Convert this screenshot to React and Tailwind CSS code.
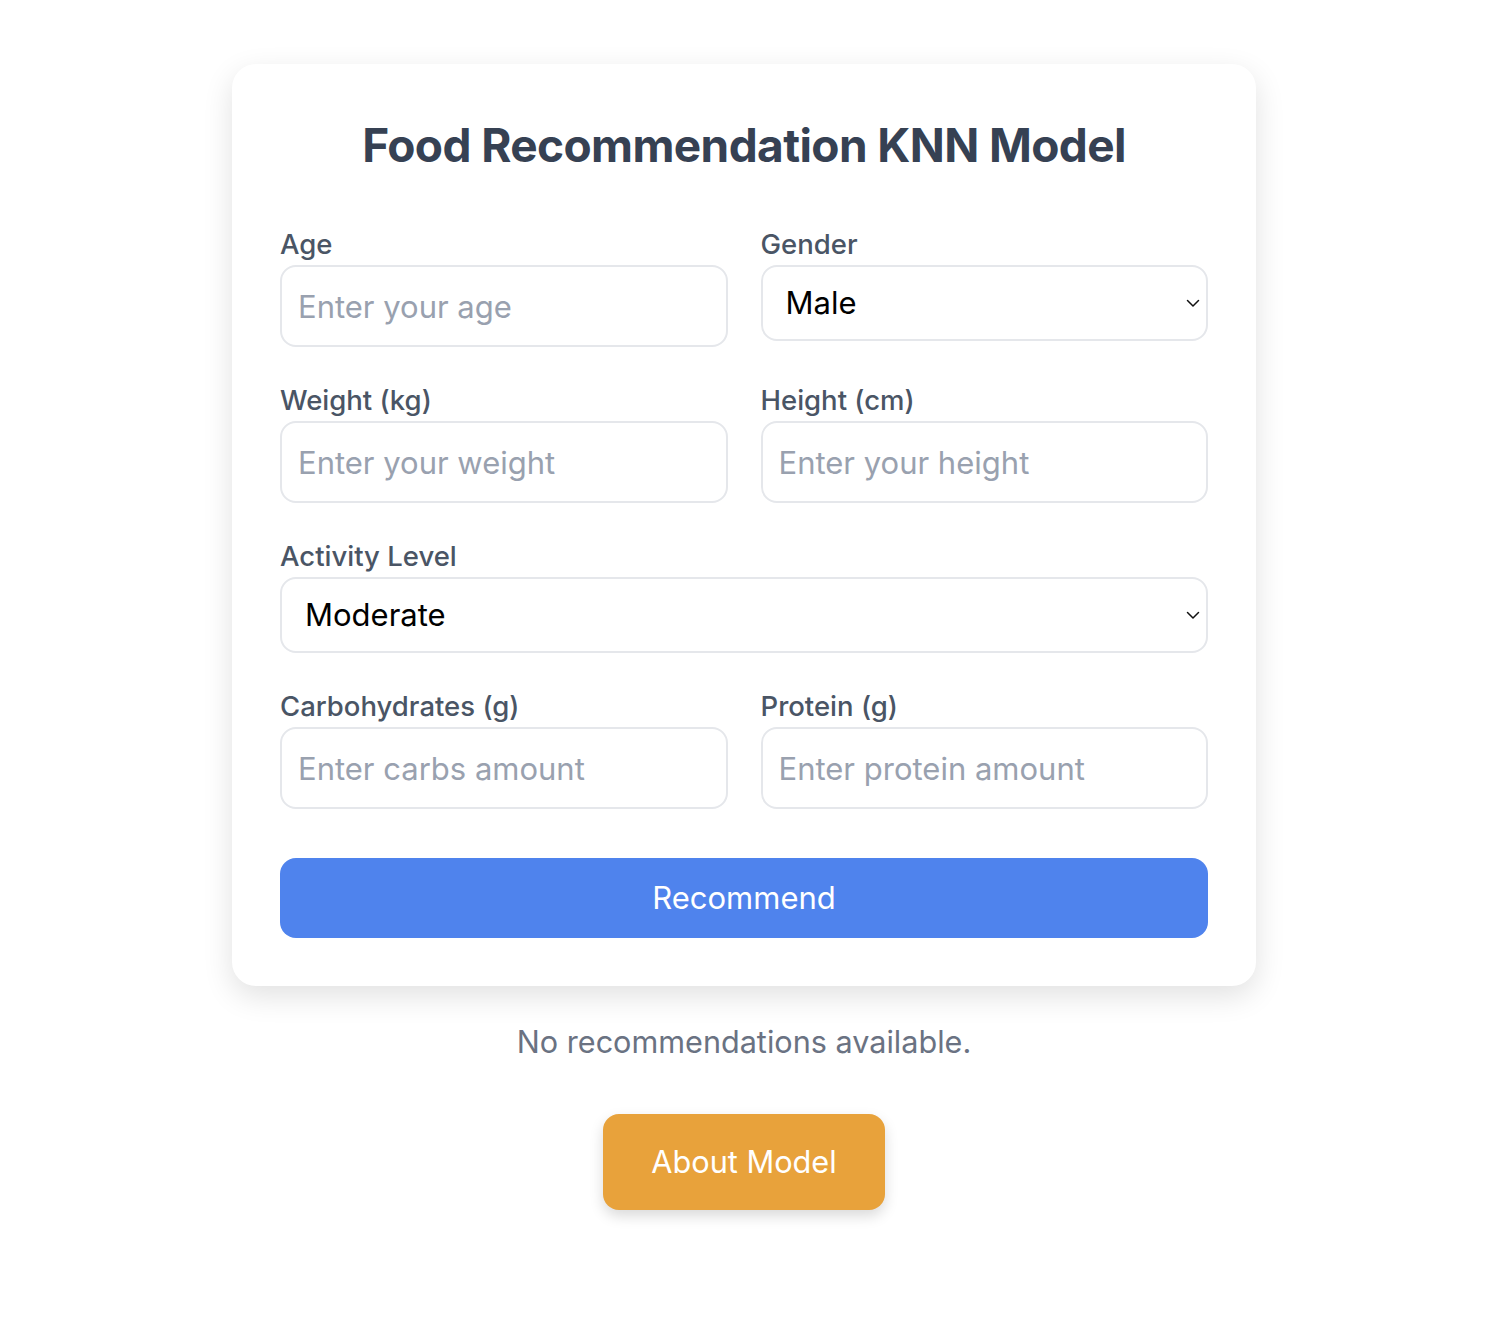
import React, { useState } from "react";

const font = { fontFamily: "Inter, 'Noto Sans', sans-serif" };

function Field({ label, placeholder, value, onChange }) {
  return (
    <div className="flex flex-col">
      <label className="text-[27.5px] leading-[30px] font-medium text-gray-600 mb-[6px]">{label}</label>
      <input
        type="number"
        placeholder={placeholder}
        value={value}
        onChange={(e) => onChange(e.target.value)}
        className="h-[82px] w-full rounded-[16px] border-2 border-gray-200 bg-white px-[16px] text-[31px] text-gray-800 placeholder:text-gray-400 outline-none"
      />
    </div>
  );
}

function Select({ label, value, onChange, options }) {
  return (
    <div className="flex flex-col">
      <label className="text-[27.5px] leading-[30px] font-medium text-gray-600 mb-[6px]">{label}</label>
      <div className="relative">
        <select
          value={value}
          onChange={(e) => onChange(e.target.value)}
          className="h-[76px] w-full appearance-none rounded-[16px] border-2 border-gray-200 bg-white pl-[23px] pr-[48px] text-[31px] text-black outline-none"
        >
          {options.map((o) => (
            <option key={o}>{o}</option>
          ))}
        </select>
        <svg
          className="pointer-events-none absolute right-[8px] top-[34px]"
          width="14"
          height="9"
          viewBox="0 0 14 9"
          fill="none"
        >
          <path d="M1.5 1.5l5.5 5.5 5.5-5.5" stroke="#111" strokeWidth="1.5" strokeLinecap="round" strokeLinejoin="round" />
        </svg>
      </div>
    </div>
  );
}

export default function App() {
  const [age, setAge] = useState("");
  const [gender, setGender] = useState("Male");
  const [weight, setWeight] = useState("");
  const [height, setHeight] = useState("");
  const [activity, setActivity] = useState("Moderate");
  const [carbs, setCarbs] = useState("");
  const [protein, setProtein] = useState("");

  return (
    <div className="min-h-screen bg-white pr-[10px] pt-[64px] pb-[100px]" style={font}>
      <div className="mx-auto w-[1024px] rounded-[24px] bg-white px-[48px] pt-[48px] pb-[48px] shadow-[0_10px_30px_rgba(0,0,0,0.12)]">
        <h1 className="text-center text-[46px] leading-[66px] font-bold tracking-[-0.6px] text-gray-700 mb-[51px]">
          Food Recommendation KNN Model
        </h1>
        <form onSubmit={(e) => e.preventDefault()}>
          <div className="grid grid-cols-2 gap-x-[33px] gap-y-[38px]">
            <Field label="Age" placeholder="Enter your age" value={age} onChange={setAge} />
            <Select label="Gender" value={gender} onChange={setGender} options={["Male", "Female"]} />
            <Field label="Weight (kg)" placeholder="Enter your weight" value={weight} onChange={setWeight} />
            <Field label="Height (cm)" placeholder="Enter your height" value={height} onChange={setHeight} />
            <div className="col-span-2">
              <Select
                label="Activity Level"
                value={activity}
                onChange={setActivity}
                options={["Sedentary", "Light", "Moderate", "Active", "Very Active"]}
              />
            </div>
            <Field label="Carbohydrates (g)" placeholder="Enter carbs amount" value={carbs} onChange={setCarbs} />
            <Field label="Protein (g)" placeholder="Enter protein amount" value={protein} onChange={setProtein} />
          </div>
          <button
            type="submit"
            className="mt-[49px] h-[80px] w-full rounded-[16px] bg-[#4f83ed] text-[31px] text-white"
          >
            Recommend
          </button>
        </form>
      </div>
      <p className="mt-[38px] text-center text-[30.6px] leading-[36px] text-gray-500">No recommendations available.</p>
      <div className="mt-[54px] flex justify-center">
        <button className="h-[96px] w-[282px] rounded-[16px] bg-[#e8a23b] text-[30.7px] text-white shadow-[0_6px_14px_rgba(0,0,0,0.15)]">
          About Model
        </button>
      </div>
    </div>
  );
}
